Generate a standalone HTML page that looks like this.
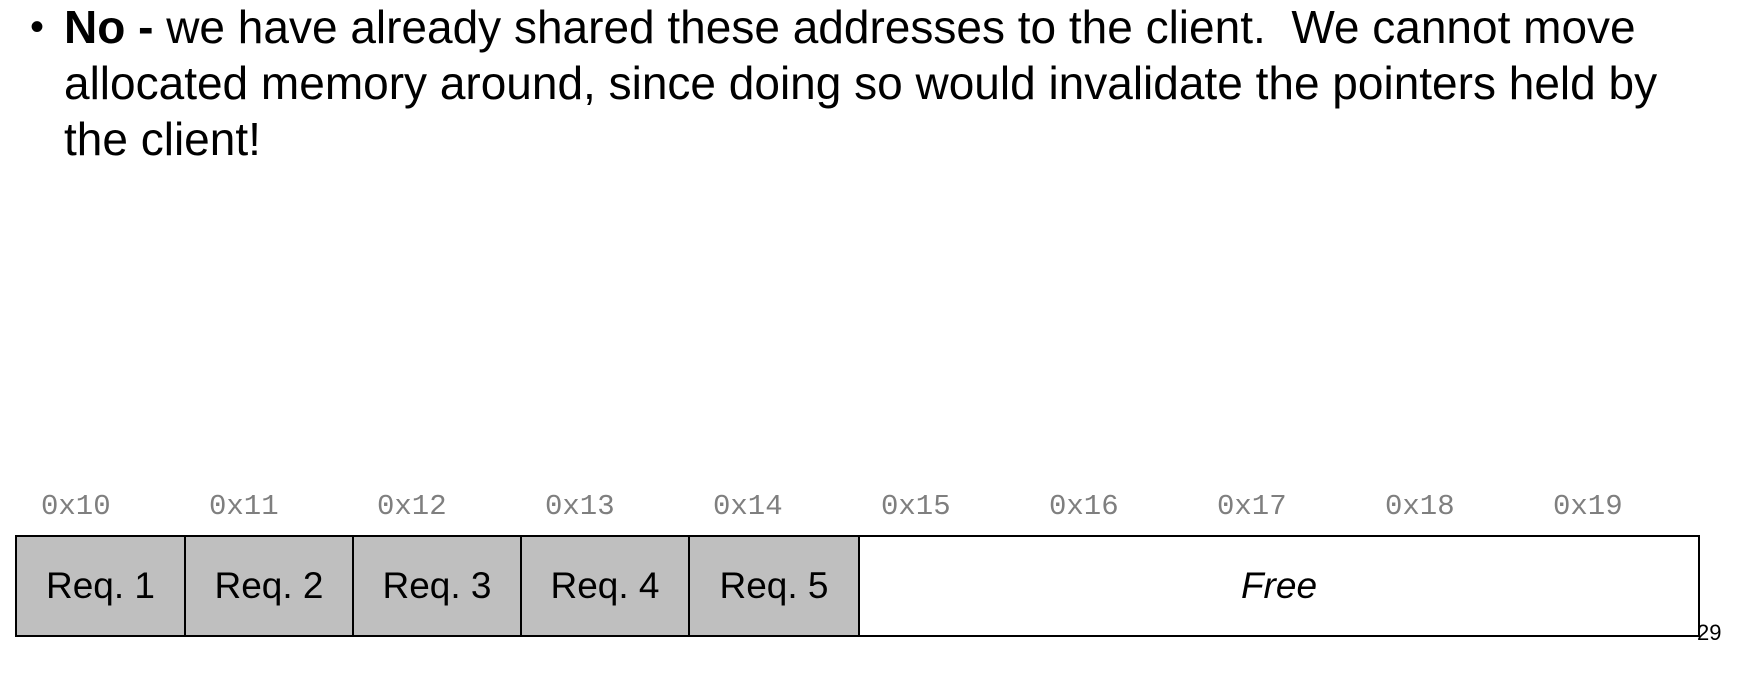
<!DOCTYPE html>
<html><head><style>
html,body{margin:0;padding:0;background:#fff;width:1753px;height:674px;overflow:hidden;position:relative;font-family:"Liberation Sans",sans-serif;}
.txt{position:absolute;left:64px;top:-1px;width:1680px;font-size:46px;line-height:56px;color:#000;white-space:nowrap;}
.bul{position:absolute;left:30px;top:-1px;font-size:40px;line-height:56px;}
.addr{position:absolute;top:490px;font-family:"Liberation Mono",monospace;font-size:29px;color:#7f7f7f;}
.cell{position:absolute;top:535px;height:102px;border:2px solid #000;box-sizing:border-box;background:#bfbfbf;display:flex;align-items:center;justify-content:center;font-size:37px;}
</style></head><body>
<div class="bul">•</div>
<div class="txt"><b>No -</b> we have already shared these addresses to the client.&nbsp; We cannot move<br>allocated memory around, since doing so would invalidate the pointers held by<br>the client!</div>
<div class="addr" style="left:41px">0x10</div>
<div class="addr" style="left:209px">0x11</div>
<div class="addr" style="left:377px">0x12</div>
<div class="addr" style="left:545px">0x13</div>
<div class="addr" style="left:713px">0x14</div>
<div class="addr" style="left:881px">0x15</div>
<div class="addr" style="left:1049px">0x16</div>
<div class="addr" style="left:1217px">0x17</div>
<div class="addr" style="left:1385px">0x18</div>
<div class="addr" style="left:1553px">0x19</div>
<div class="cell" style="left:15px;width:171px">Req. 1</div>
<div class="cell" style="left:184px;width:170px">Req. 2</div>
<div class="cell" style="left:352px;width:170px">Req. 3</div>
<div class="cell" style="left:520px;width:170px">Req. 4</div>
<div class="cell" style="left:688px;width:172px">Req. 5</div>
<div class="cell" style="left:858px;width:842px;background:#fff;font-style:italic">Free</div>
<div style="position:absolute;left:1697px;top:620px;font-size:22px;">29</div>
</body></html>
